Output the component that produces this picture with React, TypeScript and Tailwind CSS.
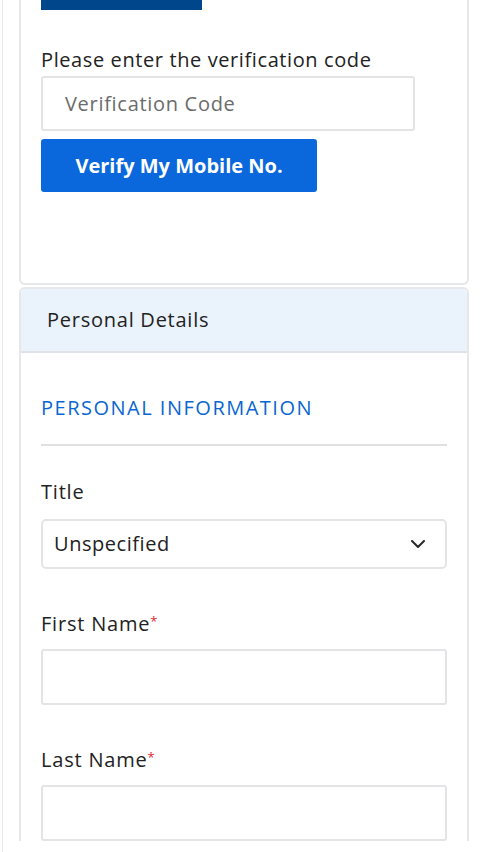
const font = { fontFamily: "'Open Sans', 'Noto Sans', sans-serif" };

function Field({ label, required }: { label: string; required?: boolean }) {
  return (
    <div className="mt-[43px]">
      <label className="block h-[24px] text-[20px] font-medium text-[#222] leading-[24px] tracking-[0.8px]">
        {label}
        {required && (
          <span className="relative -top-[5px] text-[#e0262b] text-[13px] leading-none tracking-normal">*</span>
        )}
      </label>
      <input className="mt-[13px] block w-full h-[56px] rounded-[3px] border-2 border-[#e3e4e6] bg-white" />
    </div>
  );
}

export default function App() {
  return (
    <div className="w-[480px] h-[852px] overflow-hidden bg-white" style={font}>
      <div className="h-[852px] ml-[2px] border-l border-[#e8e8e8] pl-[16px] pr-[11px]">
        {/* Verification card */}
        <div className="rounded-b-[6px] border-2 border-t-0 border-[#e6e7e9] bg-white px-[20px] pb-[91px]">
          <div className="w-[161px] h-[10px] bg-[#00468a]" />
          <p className="mt-[38px] text-[20px] leading-[24px] text-[#222] tracking-[0.6px]">
            Please enter the verification code
          </p>
          <input
            placeholder="Verification Code"
            className="mt-[4px] block w-[374px] h-[55px] rounded-[3px] border-2 border-[#e3e4e6] px-[22px] text-[20px] tracking-[0.7px] placeholder:text-[#6b6b6b] outline-none"
          />
          <button className="mt-[8px] w-[276px] h-[53px] rounded-[3px] bg-[#0a68dc] text-white text-[20px] font-bold">
            Verify My Mobile No.
          </button>
        </div>

        {/* Personal details card */}
        <div className="mt-[2px] rounded-t-[6px] border-2 border-b-0 border-[#e6e7e9] bg-white">
          <div className="h-[64px] flex items-center px-[26px] bg-[#eaf2fc] border-b-2 border-[#dfe3e8] rounded-t-[5px]">
            <h2 className="text-[20px] text-[#222] tracking-[0.75px]">Personal Details</h2>
          </div>
          <div className="px-[20px]">
            <h3 className="mt-[43px] text-[20px] text-[#0a66d0] tracking-[1.5px] leading-[24px]">
              PERSONAL INFORMATION
            </h3>
            <div className="mt-[24px] h-[2px] bg-[#e0e0e0]" />

            <div className="mt-[34px]">
              <label className="block text-[20px] font-medium text-[#222] leading-[24px] tracking-[0.8px]">Title</label>
              <div className="mt-[15px] flex items-center justify-between h-[50px] rounded-[5px] border-2 border-[#e3e4e6] pl-[11px] pr-[20px]">
                <span className="text-[20px] text-[#222] tracking-[0.55px]">Unspecified</span>
                <svg width="14" height="8" viewBox="0 0 14 8" fill="none">
                  <polyline points="1,1 7,7 13,1" stroke="#2a2a2a" strokeWidth="2" strokeLinecap="round" strokeLinejoin="round" />
                </svg>
              </div>
            </div>

            <Field label="First Name" required />
            <Field label="Last Name" required />
          </div>
        </div>
      </div>
    </div>
  );
}
